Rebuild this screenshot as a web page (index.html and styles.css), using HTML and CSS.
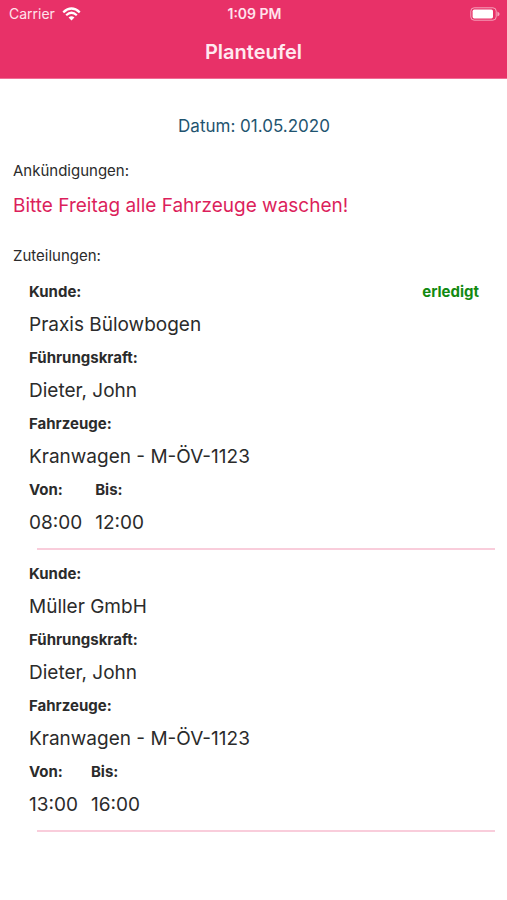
FILE: index.html
```
<!DOCTYPE html>
<html lang="de">
<head>
<meta charset="utf-8">
<meta name="viewport" content="width=device-width, initial-scale=1">
<title>Planteufel</title>
<link rel="stylesheet" href="styles.css">
</head>
<body>
<header class="header">
  <div class="status">
    <div class="carrier">
      <span>Carrier</span>
      <svg class="wifi" viewBox="0 0 20 14" aria-hidden="true">
        <path d="M1.3 5.2Q10-2.8 18.7 5.2M4.4 8.3Q10 3.2 15.6 8.3" fill="none" stroke="currentColor" stroke-width="2.4"/>
        <path d="M6.9 10.6Q10 7.9 13.1 10.6L10 13.8Z" fill="currentColor"/>
      </svg>
    </div>
    <span class="clock">1:09 PM</span>
    <svg class="battery" viewBox="0 0 30 14" aria-hidden="true">
      <rect x=".8" y=".8" width="25.4" height="12.4" rx="3.4" fill="none" stroke="currentColor" stroke-width="1" opacity=".55"/>
      <rect x="2.6" y="2.6" width="20.4" height="8.8" rx="1.6" fill="currentColor"/>
      <path d="M27.4 4.4Q29.6 5.4 29.6 7T27.4 9.6Z" fill="currentColor" opacity=".55"/>
    </svg>
  </div>
  <h1 class="title">Planteufel</h1>
</header>
<main class="content">
  <p class="date">Datum: 01.05.2020</p>
  <section class="news">
    <h2 class="heading">Ankündigungen:</h2>
    <p class="notice">Bitte Freitag alle Fahrzeuge waschen!</p>
  </section>
  <section>
    <h2 class="heading">Zuteilungen:</h2>
    <article class="job">
      <dl class="fields">
        <div><dt>Kunde:</dt><dd>Praxis Bülowbogen</dd></div>
        <div><dt>Führungskraft:</dt><dd>Dieter, John</dd></div>
        <div><dt>Fahrzeuge:</dt><dd>Kranwagen - M-ÖV-1123</dd></div>
      </dl>
      <span class="done">erledigt</span>
      <dl class="times">
        <div><dt>Von:</dt><dd>08:00</dd></div>
        <div><dt>Bis:</dt><dd>12:00</dd></div>
      </dl>
    </article>
    <hr class="divider">
    <article class="job">
      <dl class="fields">
        <div><dt>Kunde:</dt><dd>Müller GmbH</dd></div>
        <div><dt>Führungskraft:</dt><dd>Dieter, John</dd></div>
        <div><dt>Fahrzeuge:</dt><dd>Kranwagen - M-ÖV-1123</dd></div>
      </dl>
      <dl class="times">
        <div><dt>Von:</dt><dd>13:00</dd></div>
        <div><dt>Bis:</dt><dd>16:00</dd></div>
      </dl>
    </article>
    <hr class="divider">
  </section>
</main>
</body>
</html>
```
FILE: styles.css
```
* {
  box-sizing: border-box;
  margin: 0;
  padding: 0;
}

body {
  background: #fff;
  color: #2b2b2b;
  font-family: Inter, "Liberation Sans", sans-serif;
}

.header {
  background: #e83168;
  color: #fff;
  border-bottom: 1px solid #f06d95;
}

.status {
  display: grid;
  grid-template-columns: 1fr auto 1fr;
  align-items: center;
  height: 27px;
  padding: 0 7px 0 9px;
  font-size: 14px;
}

.carrier {
  display: flex;
  align-items: center;
  gap: 7px;
  color: #ffe3ec;
}

.wifi {
  width: 19px;
  height: 14px;
  color: #fff;
}

.clock {
  color: #ffe3ec;
  font-size: 14px;
  font-weight: 600;
}

.battery {
  justify-self: end;
  width: 30px;
  height: 14px;
}

.title {
  color: #ffe9f0;
  font-size: 20px;
  font-weight: 600;
  line-height: 51px;
  text-align: center;
}

.content {
  padding: 32px 12px 16px 13px;
}

.date {
  color: #1f5470;
  font-size: 17px;
  line-height: 30px;
  text-align: center;
}

.news {
  margin: 15px 0;
}

.heading {
  font-size: 15px;
  font-weight: 400;
  line-height: 30px;
}

.notice {
  color: #dc1f5c;
  font-size: 19px;
  line-height: 40px;
}

.job {
  display: grid;
  grid-template-columns: 1fr auto;
  padding: 4px 16px 9px;
}

dt,
.done {
  font-size: 15px;
  font-weight: 700;
  line-height: 33px;
}

dd {
  font-size: 19px;
  line-height: 33px;
}

.done {
  color: #128a12;
}

.times {
  display: flex;
  grid-column: 1 / -1;
  gap: 13px;
}

.divider {
  height: 2px;
  margin: 0 0 3px 24px;
  border: 0;
  background: #f9cddb;
}
```
